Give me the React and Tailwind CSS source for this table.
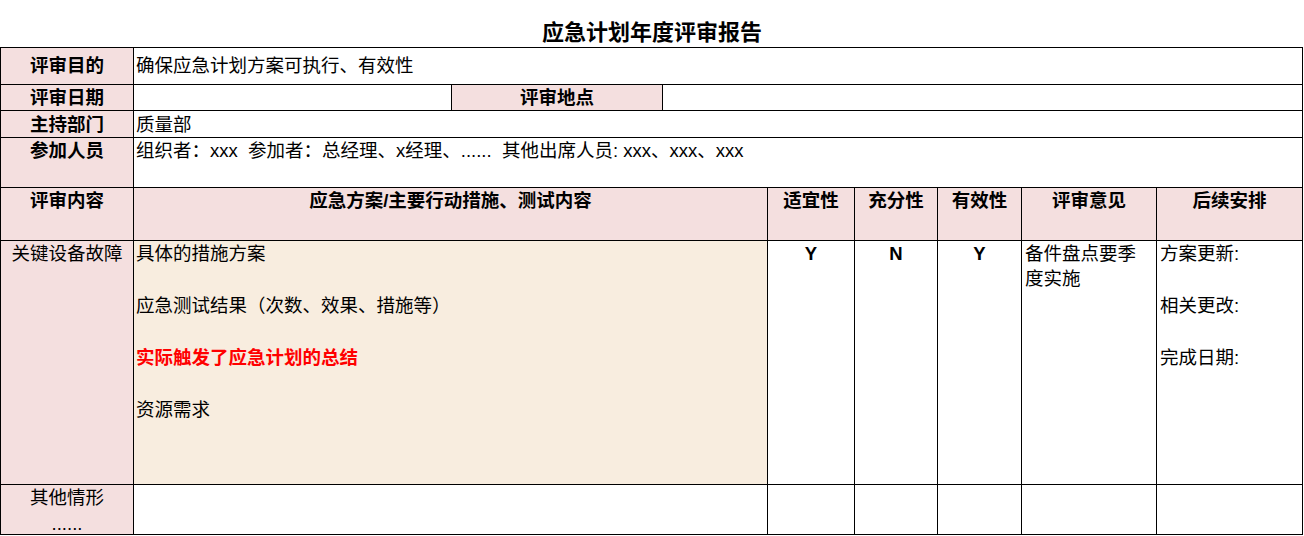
const FONT = "font-['Liberation_Sans','Noto_Sans_CJK_SC',sans-serif]";

const PINK = "bg-[#f4dfdf]";
const BEIGE = "bg-[#f8eddf]";

// one cell of the sheet; right and bottom border only, the frame draws top/left
function Cell({ className = "", children }) {
  return (
    <div className={`border-r border-b border-black overflow-hidden ${className}`}>
      {children}
    </div>
  );
}

function Label({ children, className = "" }) {
  return (
    <Cell className={`${PINK} flex items-center justify-center font-bold ${className}`}>
      {children}
    </Cell>
  );
}

const Blank = () => <div>&nbsp;</div>;

export default function App() {
  return (
    <div className={`w-[1304px] h-[536px] bg-white text-black text-[18.5px] ${FONT}`}>
      <div className="h-[47px] flex items-end justify-center">
        <h1 className="text-[22px] font-bold leading-[28px]">应急计划年度评审报告</h1>
      </div>

      <div className="w-[1303px] border-t border-l border-black">
        {/* 评审目的 */}
        <div className="grid grid-cols-[133px_1169px] h-[37px]">
          <Label>评审目的</Label>
          <Cell className="flex items-center pl-[2px]">确保应急计划方案可执行、有效性</Cell>
        </div>

        {/* 评审日期 / 地点 */}
        <div className="grid grid-cols-[133px_318px_211px_640px] h-[26px] leading-[24px]">
          <Label>评审日期</Label>
          <Cell />
          <Label>评审地点</Label>
          <Cell />
        </div>

        {/* 主持部门 */}
        <div className="grid grid-cols-[133px_1169px] h-[27px] leading-[25px]">
          <Label>主持部门</Label>
          <Cell className="flex items-center pl-[2px]">质量部</Cell>
        </div>

        {/* 参加人员 */}
        <div className="grid grid-cols-[133px_1169px] h-[50px] leading-[26px]">
          <Cell className={`${PINK} font-bold text-center`}>参加人员</Cell>
          <Cell className="pl-[2px] whitespace-pre">
            {"组织者：xxx  参加者：总经理、x经理、......  其他出席人员: xxx、xxx、xxx"}
          </Cell>
        </div>

        {/* header */}
        <div
          className={`grid grid-cols-[133px_634px_87px_83px_84px_135px_146px] h-[53px] leading-[26px] font-bold text-center ${PINK}`}
        >
          <Cell>评审内容</Cell>
          <Cell>应急方案/主要行动措施、测试内容</Cell>
          <Cell>适宜性</Cell>
          <Cell>充分性</Cell>
          <Cell>有效性</Cell>
          <Cell>评审意见</Cell>
          <Cell>后续安排</Cell>
        </div>

        {/* 关键设备故障 */}
        <div className="grid grid-cols-[133px_634px_87px_83px_84px_135px_146px] h-[244px] leading-[26px]">
          <Cell className={`${PINK} text-center`}>关键设备故障</Cell>
          <Cell className={`${BEIGE} pl-[2px]`}>
            <div>具体的措施方案</div>
            <Blank />
            <div>应急测试结果（次数、效果、措施等）</div>
            <Blank />
            <div className="font-bold text-[#ff0000]">实际触发了应急计划的总结</div>
            <Blank />
            <div>资源需求</div>
          </Cell>
          <Cell className="text-center font-bold">Y</Cell>
          <Cell className="text-center font-bold">N</Cell>
          <Cell className="text-center font-bold">Y</Cell>
          <Cell className="pl-[3px] leading-[25px]">
            备件盘点要季
            <br />
            度实施
          </Cell>
          <Cell className="pl-[3px]">
            <div>方案更新:</div>
            <Blank />
            <div>相关更改:</div>
            <Blank />
            <div>完成日期:</div>
          </Cell>
        </div>

        {/* 其他情形 */}
        <div className="grid grid-cols-[133px_634px_87px_83px_84px_135px_146px] h-[50px] leading-[26px]">
          <Cell className={`${PINK} text-center`}>
            <div>其他情形</div>
            <div className="leading-[26px]">......</div>
          </Cell>
          <Cell />
          <Cell />
          <Cell />
          <Cell />
          <Cell />
          <Cell />
        </div>
      </div>
    </div>
  );
}
